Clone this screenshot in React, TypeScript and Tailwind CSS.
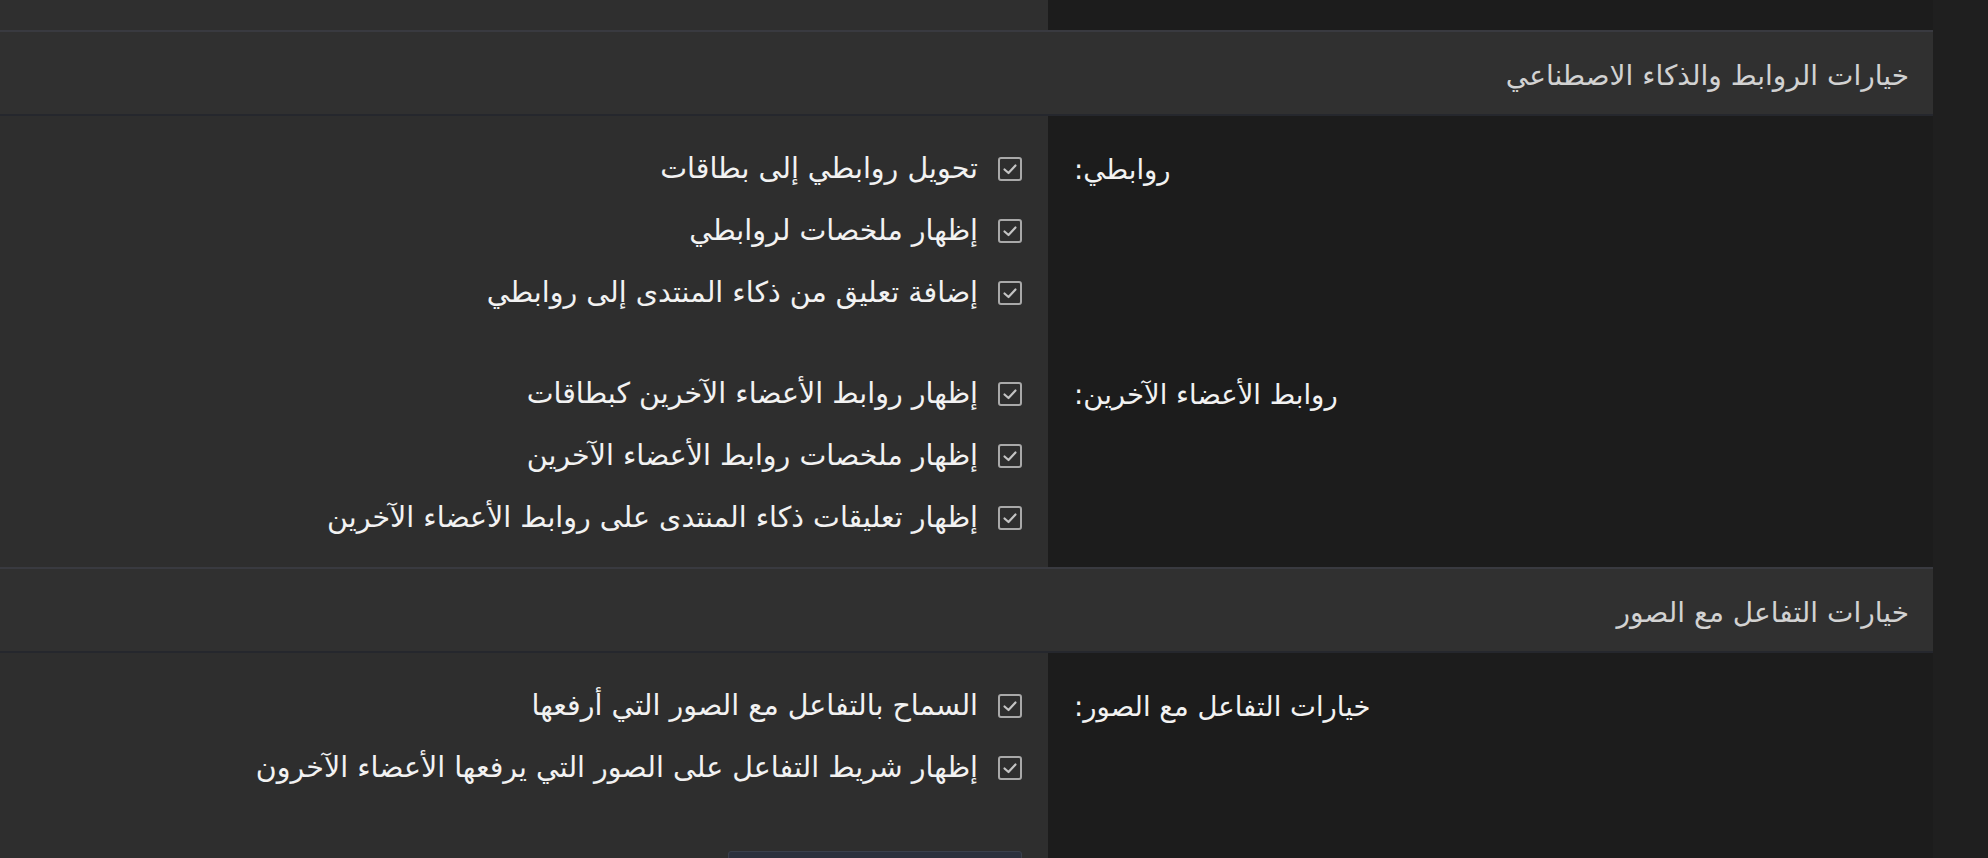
import React from "react";

function CheckIcon() {
  return (
    <span className="flex h-[24px] w-[24px] shrink-0 items-center justify-center rounded-[3px] border-2 border-[#a9a9a9]">
      <svg width="16" height="16" viewBox="0 0 16 16" fill="none">
        <path
          d="M2.5 8.5 L6.5 12 L13.5 4.5"
          stroke="#c4c4c4"
          strokeWidth="2.2"
          strokeLinecap="round"
          strokeLinejoin="round"
        />
      </svg>
    </span>
  );
}

function Option({ text }: { text: string }) {
  return (
    <li className="flex h-[62px] items-center gap-[20px]">
      <CheckIcon />
      <span className="whitespace-nowrap text-[28.5px] leading-[62px] text-[#f2f2f2]">{text}</span>
    </li>
  );
}

function FormRow({
  label,
  options,
  className,
}: {
  label: string;
  options: string[];
  className: string;
}) {
  return (
    <div className="flex">
      <dt
        className={`w-[885px] shrink-0 bg-[#1c1c1c] pl-[26px] text-left text-[27.5px] leading-[62px] text-[#f2f2f2] ${className}`}
      >
        {label}
      </dt>
      <dd className={`flex-1 bg-[#2e2e2e] pr-[26px] ${className}`}>
        <ul>
          {options.map((o) => (
            <Option key={o} text={o} />
          ))}
        </ul>
      </dd>
    </div>
  );
}

function SectionHeader({ title }: { title: string }) {
  return (
    <h3 className="flex h-[86px] items-center border-t-2 border-b-2 border-t-[#393a40] border-b-[#25272d] bg-[#303030] pt-[5px] pr-[24px] text-[28px] font-normal text-[#d2d2d2]">
      {title}
    </h3>
  );
}

export default function App() {
  return (
    <div
      className="flex h-[858px] w-[1988px] overflow-hidden bg-[#1f1f1f]"
      style={{ fontFamily: "'DejaVu Sans', 'Noto Sans', sans-serif" }}
    >
      <div dir="rtl" className="w-[1933px] shrink-0">
        {/* end of the previous row */}
        <div className="flex h-[30px]">
          <div className="w-[885px] shrink-0 bg-[#1c1c1c]" />
          <div className="flex-1 bg-[#2f2f2f]" />
        </div>

        <SectionHeader title="خيارات الروابط والذكاء الاصطناعي" />
        <dl>
          <FormRow
            label="روابطي:"
            className="pt-[22px] pb-[19px]"
            options={[
              "تحويل روابطي إلى بطاقات",
              "إظهار ملخصات لروابطي",
              "إضافة تعليق من ذكاء المنتدى إلى روابطي",
            ]}
          />
          <FormRow
            label="روابط الأعضاء الآخرين:"
            className="pt-[20px] pb-[18px]"
            options={[
              "إظهار روابط الأعضاء الآخرين كبطاقات",
              "إظهار ملخصات روابط الأعضاء الآخرين",
              "إظهار تعليقات ذكاء المنتدى على روابط الأعضاء الآخرين",
            ]}
          />
        </dl>

        <SectionHeader title="خيارات التفاعل مع الصور" />
        <dl>
          <FormRow
            label="خيارات التفاعل مع الصور:"
            className="pt-[22px] pb-[19px]"
            options={[
              "السماح بالتفاعل مع الصور التي أرفعها",
              "إظهار شريط التفاعل على الصور التي يرفعها الأعضاء الآخرون",
            ]}
          />
          <div className="flex h-[200px]">
            <div className="w-[885px] shrink-0 bg-[#1c1c1c]" />
            <div className="flex-1 bg-[#2e2e2e] pr-[26px] pt-[33px]">
              <div className="h-[40px] w-[294px] rounded-[3px] border border-[#3b404c] bg-[#2c313d]" />
            </div>
          </div>
        </dl>
      </div>
    </div>
  );
}
